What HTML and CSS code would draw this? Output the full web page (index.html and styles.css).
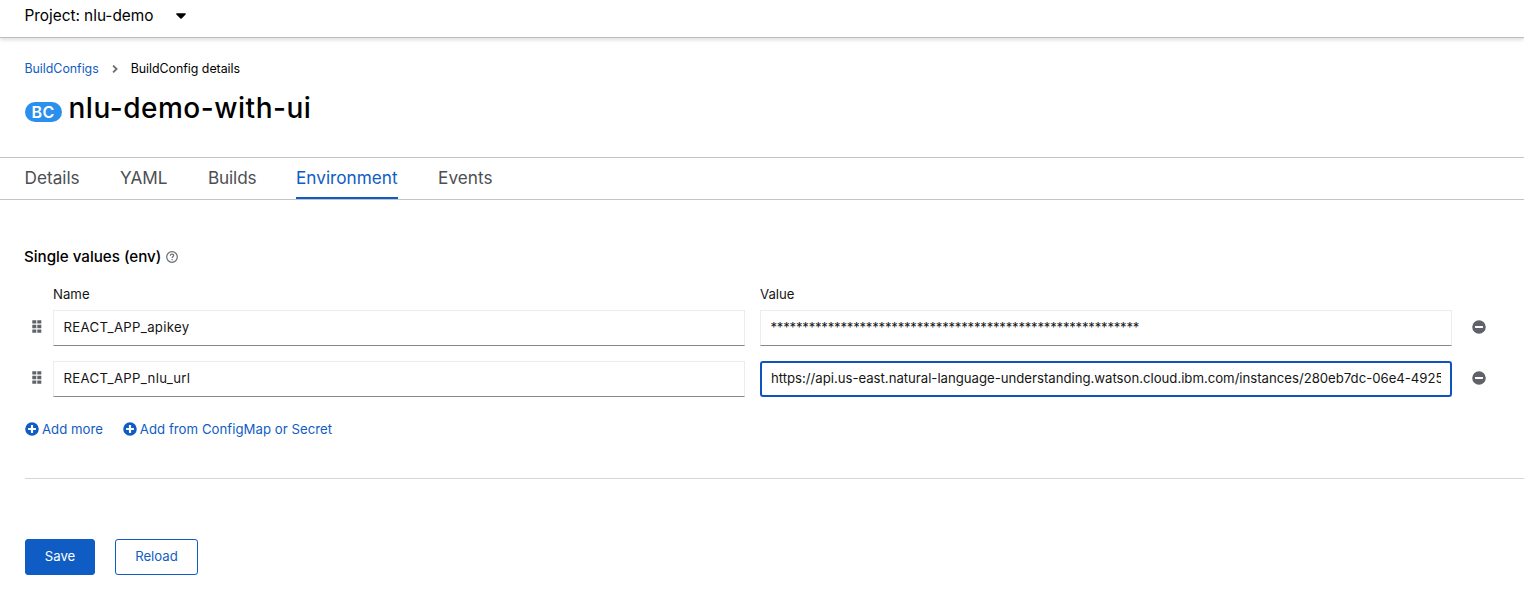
FILE: index.html
```
<!DOCTYPE html>
<html lang="en">
<head>
<meta charset="utf-8">
<title>nlu-demo-with-ui · BuildConfig details</title>
<link rel="stylesheet" href="styles.css">
</head>
<body>
<svg class="defs" aria-hidden="true">
  <symbol id="grip" viewBox="0 0 10 13"><path d="M.3.2h4v3.400h-4zM5.300.2h4v3.400h-4zM.3 4.700h4v3.600h-4zM5.300 4.700h4v3.600h-4zM.3 9.400h4v3.400h-4zM5.300 9.400h4v3.400h-4z"/></symbol>
  <symbol id="plus" viewBox="0 0 512 512"><path d="M256 8a248 248 0 1 0 0 496 248 248 0 0 0 0-496zm144 276c0 7-5 12-12 12h-92v92c0 7-5 12-12 12h-56c-7 0-12-5-12-12v-92h-92c-7 0-12-5-12-12v-56c0-7 5-12 12-12h92v-92c0-7 5-12 12-12h56c7 0 12 5 12 12v92h92c7 0 12 5 12 12v56z"/></symbol>
  <symbol id="minus" viewBox="0 0 512 512"><path d="M256 8a248 248 0 1 0 0 496 248 248 0 0 0 0-496zM124 296c-7 0-12-5-12-12v-56c0-7 5-12 12-12h264c7 0 12 5 12 12v56c0 7-5 12-12 12H124z"/></symbol>
</svg>

<div class="project-bar">
  <span>Project: nlu-demo</span>
  <svg class="caret" viewBox="0 0 10 6"><path d="M.9.3h8.2c.7 0 1 .8.5 1.2L5.6 5.4c-.3.3-.9.3-1.2 0L.4 1.500C-.1 1.100.200.300.9.300z"/></svg>
</div>

<header class="page-head">
  <nav class="breadcrumb">
    <a class="link" href="#">BuildConfigs</a>
    <svg class="chevron" viewBox="0 0 6 8"><path d="M1.100.600 4.600 4 1.100 7.400"/></svg>
    <span>BuildConfig details</span>
  </nav>
  <h1 class="title"><span class="badge">BC</span><span class="title-text">nlu-demo-with-ui</span></h1>
</header>

<nav class="tabs">
  <a class="tab tab-details" href="#">Details</a>
  <a class="tab tab-yaml" href="#">YAML</a>
  <a class="tab tab-builds" href="#">Builds</a>
  <a class="tab tab-env active" href="#">Environment</a>
  <a class="tab tab-events" href="#">Events</a>
</nav>

<main class="content">
  <h2 class="section-title"><span>Single values (env)</span>
    <svg class="help" viewBox="0 0 12 12"><circle cx="6" cy="6" r="5.300"/><path d="M4.300 4.700c.1-1 .8-1.500 1.700-1.500s1.700.6 1.700 1.400c0 1.100-1.600 1.200-1.600 2.300"/><path d="M6.100 8v1.200"/></svg>
  </h2>
  <div class="grid labels"><span></span><span>Name</span><span>Value</span></div>
  <div class="grid">
    <svg class="grip"><use href="#grip"/></svg>
    <div class="field"><span class="name">REACT_APP_apikey</span></div>
    <div class="field"><span class="mask">**********************************************************</span></div>
    <svg class="minus"><use href="#minus"/></svg>
  </div>
  <div class="grid">
    <svg class="grip"><use href="#grip"/></svg>
    <div class="field"><span class="name">REACT_APP_nlu_url</span></div>
    <div class="field focused"><span class="url">https://api.us-east.natural-language-understanding.watson.cloud.ibm.com/instances/280eb7dc-06e4-4925</span></div>
    <svg class="minus"><use href="#minus"/></svg>
  </div>
  <div class="add-links">
    <a class="link add" href="#"><svg><use href="#plus"/></svg>Add more</a>
    <a class="link add" href="#"><svg><use href="#plus"/></svg><span class="add-from">Add from ConfigMap or Secret</span></a>
  </div>
  <div class="actions">
    <button class="btn primary">Save</button>
    <button class="btn secondary">Reload</button>
  </div>
</main>
</body>
</html>
```

FILE: styles.css
```
* { box-sizing: border-box; }
body { margin: 0; height: 590px; overflow: hidden; background: #fff; color: #151515; font: 13.2px/20px Inter, "Open Sans", sans-serif; }
a { text-decoration: none; color: inherit; }
svg { display: block; flex: none; }
.defs { display: none; }
.link { color: #0f5dc4; }

.project-bar { display: flex; align-items: center; gap: 22.5px; height: 38px; padding: 0 25px 6px 24.5px; border-bottom: 1px solid #bebebe; box-shadow: 0 2px 4px rgba(0,0,0,.13); font-size: 15.4px; letter-spacing: -.03px; color: #000; }
.caret { width: 10px; height: 6px; fill: #000; }

.page-head { height: 119px; padding: 21px 25px 0 24.5px; }
.breadcrumb { display: flex; align-items: center; font-size: 12.4px; letter-spacing: -.03px; color: #000; }
.chevron { width: 6px; height: 8px; margin: 0 13px; fill: none; stroke: #6a6e73; stroke-width: 1.8; }
.title { display: flex; align-items: center; gap: 7px; margin: 11px 0 0; font-size: 28px; line-height: 36px; font-weight: 500; color: #000; }
.title-text { letter-spacing: .52px; }
.badge { width: 37px; height: 20px; margin-top: 8px; border-radius: 10px; background: #2b8fee; color: #fff; font-size: 16px; line-height: 20px; font-weight: 600; letter-spacing: .3px; text-align: center; }

.tabs { display: flex; gap: 40px; height: 43px; padding-left: 24.5px; border-top: 1px solid #c4c4c4; border-bottom: 1px solid #c4c4c4; font-size: 17.2px; line-height: 40px; color: #4c4f53; }
.tab { height: 41px; white-space: nowrap; }
.tab-details { width: 55.5px; }
.tab-yaml { width: 48px; }
.tab-builds { width: 48px; letter-spacing: -.15px; }
.tab-env { width: 102px; }
.tab-events { letter-spacing: .05px; }
.active { color: #0f5dc4; border-bottom: 2px solid #0f5dc4; }

.content { padding: 46px 0 0 25px; }
.section-title { display: flex; align-items: center; gap: 5px; height: 22px; margin: 0 0 16px -1px; font-size: 15.2px; font-weight: 500; letter-spacing: -.03px; color: #000; }
.help { width: 12px; height: 12px; margin-top: -1px; fill: none; stroke: #6a6e73; stroke-width: 1.2; }
.grid { display: grid; grid-template-columns: 13px 692px 692px 14px; column-gap: 15px; align-items: center; margin-bottom: 15px; }
.labels { height: 20px; margin-bottom: 6px; }
.grip { width: 10px; height: 13px; margin-left: 7px; margin-top: -3px; fill: #5f6268; }
.minus { width: 14px; height: 14px; margin-left: 5px; margin-top: -2px; fill: #5f6268; }
.field { height: 36px; padding: 6px 9.5px; border: 1px solid #ececec; border-bottom-color: #85888c; overflow: hidden; white-space: nowrap; }
.field span { display: block; overflow: hidden; }
.focused { padding: 5px 9px; border: 2px solid #0f53bd; border-radius: 3px; }
.name { letter-spacing: .32px; }
.mask { letter-spacing: -.25px; }
.url { letter-spacing: -.02px; }

.add-links { display: flex; gap: 20px; height: 60px; padding-top: 7px; }
.add { display: flex; align-items: center; gap: 3px; height: 20px; }
.add svg { width: 14px; height: 14px; fill: #0f5dc4; }
.add-from { letter-spacing: .03px; }
.actions { display: flex; gap: 20px; padding-top: 60px; margin-top: 6px; border-top: 1px solid #d6d6d6; }
.btn { height: 36px; padding: 0 0 2px; border: 1px solid #0f5dc4; border-radius: 3px; font: inherit; }
.primary { width: 70px; background: #0f5dc4; color: #fff; }
.secondary { width: 83px; background: #fff; color: #0f5dc4; }
```
